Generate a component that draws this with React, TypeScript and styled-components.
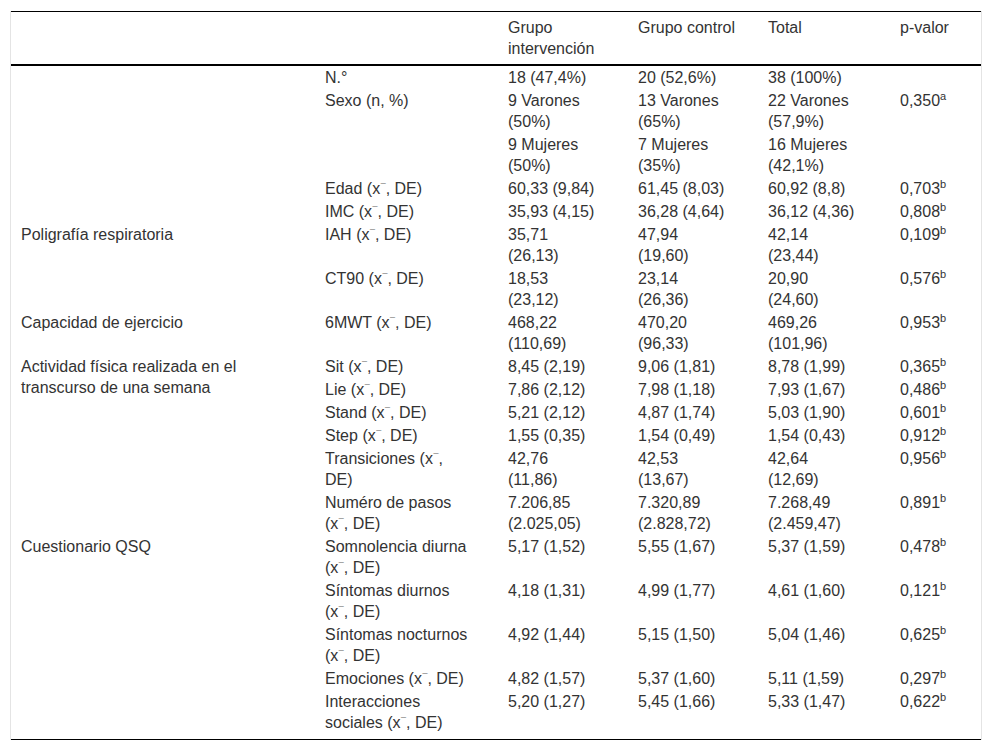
import React from "react";
import styled, { createGlobalStyle } from "styled-components";

const GlobalStyle = createGlobalStyle`
  html, body {
    margin: 0;
    padding: 0;
    background: #fff;
  }
  body {
    font-family: "Liberation Sans", Arial, sans-serif;
    color: #333;
  }
`;

const Frame = styled.div`
  box-sizing: border-box;
  width: 972px;
  margin: 11px 0 0 10px;
  border-left: 1px solid #e4e4e4;
  border-right: 1px solid #e4e4e4;
`;

const Table = styled.table`
  width: 100%;
  table-layout: fixed;
  border-collapse: collapse;
  font-size: 16px;
  line-height: 21px;
  border-top: 1px solid #000;
  border-bottom: 1px solid #000;
`;

const HeadRow = styled.tr`
  border-bottom: 2px solid #000;
`;

const Th = styled.th`
  text-align: left;
  font-weight: normal;
  vertical-align: top;
  padding: 5px 10px 5px 10px;
`;

const Td = styled.td<{ $last?: boolean }>`
  vertical-align: top;
  padding: 1px 29px ${(p) => (p.$last ? "6px" : "1px")} 10px;
`;

const Sup = styled.sup`
  font-size: 11px;
  line-height: 0;
  vertical-align: 6px;
`;

// the mean sign: an x with its bar set off to the upper right
const Bar = styled.span`
  font-size: 9px;
  line-height: 0;
  vertical-align: 4px;
  margin-left: 0.5px;
`;

const Mean = () => (
  <>
    x<Bar>¯</Bar>
  </>
);

const stat = (name: string, breakName?: boolean) => (
  <>
    {name}
    {breakName ? " " : " "}(<Mean />, DE)
  </>
);

type Row = {
  group?: { text: string; span: number };
  label: React.ReactNode;
  g1: string;
  g2: string;
  total: string;
  p?: { value: string; mark: string };
  span?: number;
  skipLabel?: boolean;
  skipP?: boolean;
};

const rows: Row[] = [
  { group: { text: "", span: 5 }, label: "N.°", g1: "18 (47,4%)", g2: "20 (52,6%)", total: "38 (100%)", p: { value: "", mark: "" } },
  { label: "Sexo (n, %)", span: 2, g1: "9 Varones (50%)", g2: "13 Varones (65%)", total: "22 Varones (57,9%)", p: { value: "0,350", mark: "a" } },
  { label: "", skipLabel: true, skipP: true, g1: "9 Mujeres (50%)", g2: "7 Mujeres (35%)", total: "16 Mujeres (42,1%)" },
  { label: stat("Edad"), g1: "60,33 (9,84)", g2: "61,45 (8,03)", total: "60,92 (8,8)", p: { value: "0,703", mark: "b" } },
  { label: stat("IMC"), g1: "35,93 (4,15)", g2: "36,28 (4,64)", total: "36,12 (4,36)", p: { value: "0,808", mark: "b" } },
  { group: { text: "Poligrafía respiratoria", span: 2 }, label: stat("IAH"), g1: "35,71 (26,13)", g2: "47,94 (19,60)", total: "42,14 (23,44)", p: { value: "0,109", mark: "b" } },
  { label: stat("CT90"), g1: "18,53 (23,12)", g2: "23,14 (26,36)", total: "20,90 (24,60)", p: { value: "0,576", mark: "b" } },
  { group: { text: "Capacidad de ejercicio", span: 1 }, label: stat("6MWT"), g1: "468,22 (110,69)", g2: "470,20 (96,33)", total: "469,26 (101,96)", p: { value: "0,953", mark: "b" } },
  { group: { text: "Actividad física realizada en el transcurso de una semana", span: 6 }, label: stat("Sit"), g1: "8,45 (2,19)", g2: "9,06 (1,81)", total: "8,78 (1,99)", p: { value: "0,365", mark: "b" } },
  { label: stat("Lie"), g1: "7,86 (2,12)", g2: "7,98 (1,18)", total: "7,93 (1,67)", p: { value: "0,486", mark: "b" } },
  { label: stat("Stand"), g1: "5,21 (2,12)", g2: "4,87 (1,74)", total: "5,03 (1,90)", p: { value: "0,601", mark: "b" } },
  { label: stat("Step"), g1: "1,55 (0,35)", g2: "1,54 (0,49)", total: "1,54 (0,43)", p: { value: "0,912", mark: "b" } },
  { label: stat("Transiciones"), g1: "42,76 (11,86)", g2: "42,53 (13,67)", total: "42,64 (12,69)", p: { value: "0,956", mark: "b" } },
  { label: stat("Numéro de pasos"), g1: "7.206,85 (2.025,05)", g2: "7.320,89 (2.828,72)", total: "7.268,49 (2.459,47)", p: { value: "0,891", mark: "b" } },
  { group: { text: "Cuestionario QSQ", span: 5 }, label: stat("Somnolencia diurna"), g1: "5,17 (1,52)", g2: "5,55 (1,67)", total: "5,37 (1,59)", p: { value: "0,478", mark: "b" } },
  { label: stat("Síntomas diurnos"), g1: "4,18 (1,31)", g2: "4,99 (1,77)", total: "4,61 (1,60)", p: { value: "0,121", mark: "b" } },
  { label: stat("Síntomas nocturnos"), g1: "4,92 (1,44)", g2: "5,15 (1,50)", total: "5,04 (1,46)", p: { value: "0,625", mark: "b" } },
  { label: stat("Emociones"), g1: "4,82 (1,57)", g2: "5,37 (1,60)", total: "5,11 (1,59)", p: { value: "0,297", mark: "b" } },
  { label: stat("Interacciones sociales"), g1: "5,20 (1,27)", g2: "5,45 (1,66)", total: "5,33 (1,47)", p: { value: "0,622", mark: "b" } },
];

const widths = [304, 183, 130, 130, 132, 91];

export default function App(): JSX.Element {
  return (
    <>
      <GlobalStyle />
      <Frame>
        <Table>
          <colgroup>
            {widths.map((w, i) => (
              <col key={i} style={{ width: w }} />
            ))}
          </colgroup>
          <thead>
            <HeadRow>
              <Th />
              <Th />
              <Th>Grupo intervención</Th>
              <Th>Grupo control</Th>
              <Th>Total</Th>
              <Th>p-valor</Th>
            </HeadRow>
          </thead>
          <tbody>
            {rows.map((r, i) => {
              const last = i === rows.length - 1;
              return (
                <tr key={i}>
                  {r.group && (
                    <Td rowSpan={r.group.span} $last={i + r.group.span === rows.length}>
                      {r.group.text}
                    </Td>
                  )}
                  {!r.skipLabel && (
                    <Td rowSpan={r.span} $last={last}>
                      {r.label}
                    </Td>
                  )}
                  <Td $last={last}>{r.g1}</Td>
                  <Td $last={last}>{r.g2}</Td>
                  <Td $last={last}>{r.total}</Td>
                  {!r.skipP && (
                    <Td rowSpan={r.span} $last={last}>
                      {r.p && r.p.value}
                      {r.p && r.p.mark && <Sup>{r.p.mark}</Sup>}
                    </Td>
                  )}
                </tr>
              );
            })}
          </tbody>
        </Table>
      </Frame>
    </>
  );
}
